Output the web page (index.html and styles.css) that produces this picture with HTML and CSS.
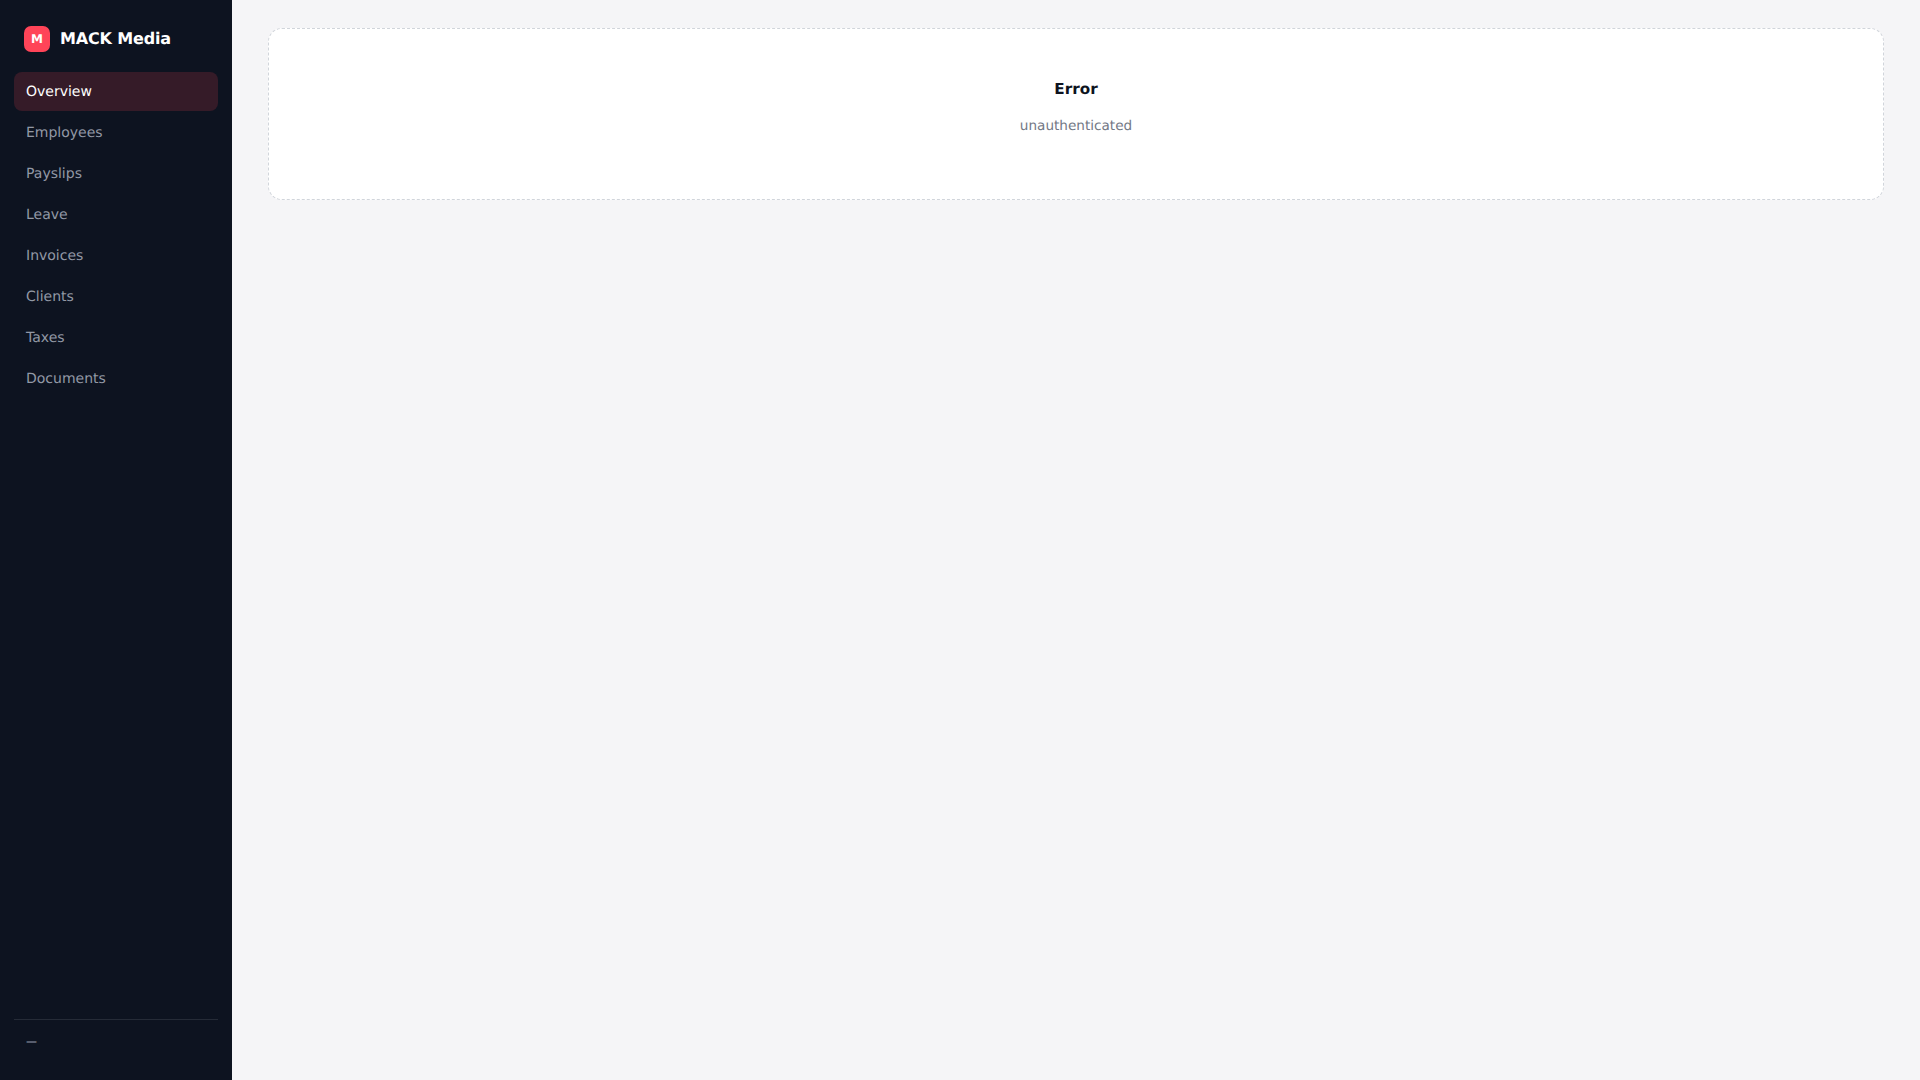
FILE: index.html
```html
<!DOCTYPE html>
<html lang="en">
<head>
<meta charset="utf-8">
<title>MACK Media</title>
<link rel="stylesheet" href="styles.css">
</head>
<body>
<div class="app">
  <aside class="sidebar">
    <div class="brand"><span class="logo">M</span><span class="brand-name">MACK Media</span></div>
    <nav class="nav">
      <a class="nav-item active">Overview</a>
      <a class="nav-item">Employees</a>
      <a class="nav-item">Payslips</a>
      <a class="nav-item">Leave</a>
      <a class="nav-item">Invoices</a>
      <a class="nav-item">Clients</a>
      <a class="nav-item">Taxes</a>
      <a class="nav-item">Documents</a>
    </nav>
    <div class="foot">—</div>
  </aside>
  <main class="main">
    <section class="card">
      <h2 class="title">Error</h2>
      <p class="msg">unauthenticated</p>
    </section>
  </main>
</div>
</body>
</html>
```
FILE: styles.css
```css
* { box-sizing: border-box; }
html, body { margin: 0; height: 100%; }
body { font-family: "DejaVu Sans", sans-serif; background: #f5f5f7; font-size: 14px; text-rendering: geometricPrecision; }
.app { display: flex; height: 100vh; }
.sidebar { width: 232px; flex: none; background: #0d1320; padding: 26px 14px 0; display: flex; flex-direction: column; }
.brand { display: flex; align-items: center; gap: 10px; padding: 0 10px; height: 26px; margin-bottom: 20px; }
.logo { width: 26px; height: 26px; border-radius: 7px; background: #ff4458; color: #fff; font-size: 12px; font-weight: 700; display: flex; align-items: center; justify-content: center; }
.brand-name { color: #fff; font-size: 16px; font-weight: 700; letter-spacing: -0.01em; line-height: 24px; margin-top: -1px; }
.nav { display: flex; flex-direction: column; gap: 2px; flex: 1; }
.nav-item { height: 39px; padding: 10px 12px 9px; line-height: 20px; border-radius: 8px; color: #9298a5; font-size: 14px; }
.nav-item.active { background: #351b28; color: #fff; }
.foot { border-top: 1px solid #252b37; padding: 12px 12px 0; color: #9298a5; font-size: 11px; line-height: 20px; height: 61px; }
.main { flex: 1; padding: 28px 36px; }
.card { height: 172px; background: #fff; border: 1px dashed #d1d5db; border-radius: 14px; padding: 48px 24px; text-align: center; }
.title { margin: 0; font-size: 15.2px; font-weight: 700; color: #0d1320; line-height: 24px; }
.msg { margin: 15px 0 0; font-size: 13.6px; color: #737885; line-height: 20px; }
```
